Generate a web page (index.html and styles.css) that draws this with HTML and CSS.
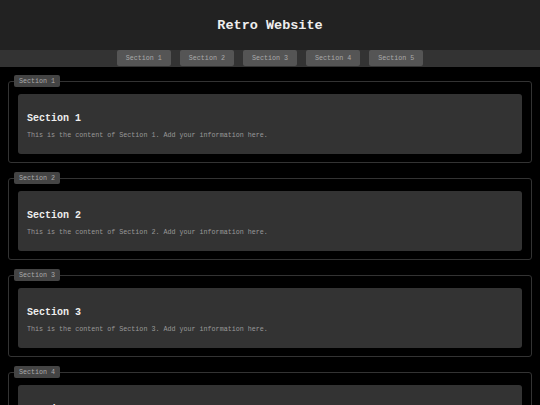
FILE: index.html
```html
<!DOCTYPE html>
<html lang="en">
  <head>
    <meta charset="UTF-8" />
    <meta name="viewport" content="width=device-width, initial-scale=1.0" />
    <title>Retro Website</title>
    <link rel="stylesheet" href="styles.css">
  </head>
  <body>
    <header class="site-header">
      <h1>Retro Website</h1>
    </header>
    <nav class="site-nav">
      <a class="nav-btn" href="#section1">Section 1</a>
      <a class="nav-btn" href="#section2">Section 2</a>
      <a class="nav-btn" href="#section3">Section 3</a>
      <a class="nav-btn" href="#section4">Section 4</a>
      <a class="nav-btn" href="#section5">Section 5</a>
    </nav>
    <main class="content">
      <fieldset class="section" id="section1">
        <legend>Section 1</legend>
        <div class="card">
          <h2>Section 1</h2>
          <p>This is the content of Section 1. Add your information here.</p>
        </div>
      </fieldset>
      <fieldset class="section" id="section2">
        <legend>Section 2</legend>
        <div class="card">
          <h2>Section 2</h2>
          <p>This is the content of Section 2. Add your information here.</p>
        </div>
      </fieldset>
      <fieldset class="section" id="section3">
        <legend>Section 3</legend>
        <div class="card">
          <h2>Section 3</h2>
          <p>This is the content of Section 3. Add your information here.</p>
        </div>
      </fieldset>
      <fieldset class="section" id="section4">
        <legend>Section 4</legend>
        <div class="card">
          <h2>Section 4</h2>
          <p>This is the content of Section 4. Add your information here.</p>
        </div>
      </fieldset>
      <fieldset class="section" id="section5">
        <legend>Section 5</legend>
        <div class="card">
          <h2>Section 5</h2>
          <p>This is the content of Section 5. Add your information here.</p>
        </div>
      </fieldset>
    </main>
  </body>
</html>
```

FILE: styles.css
```css
body {
  margin: 0;
  background-color: #000;
  font-family: "Liberation Mono", "Courier New", monospace;
  color: #999;
}

.site-header {
  background-color: #222;
  height: 50px;
  display: flex;
  align-items: center;
  justify-content: center;
}

.site-header h1 {
  margin: 0;
  font-size: 13.5px;
  font-weight: bold;
  color: #eee;
}

.site-nav {
  background-color: #333;
  height: 17px;
  display: flex;
  justify-content: center;
  align-items: flex-start;
  gap: 9px;
}

.nav-btn {
  display: block;
  height: 16px;
  line-height: 17px;
  padding: 0 9px;
  background-color: #555;
  border-radius: 2px;
  color: #aaa;
  font-size: 6.7px;
  text-decoration: none;
}

.content {
  padding-top: 8px;
}

.section {
  margin: 0 8px 9px;
  padding: 7px 9px 8px;
  border: 1px solid #333;
  border-radius: 3px;
}

.section legend {
  margin-left: -4px;
  padding: 0 5px;
  height: 12px;
  line-height: 12px;
  background-color: #444;
  border-radius: 2px;
  color: #aaa;
  font-size: 6.7px;
}

.card {
  background-color: #333;
  border-radius: 3px;
  padding: 9px;
}

.card h2 {
  margin: 10px 0 6px;
  font-size: 10px;
  line-height: 12px;
  color: #eee;
}

.card p {
  margin: 0 0 6px;
  font-size: 6.7px;
  line-height: 8px;
  color: #999;
}
```
